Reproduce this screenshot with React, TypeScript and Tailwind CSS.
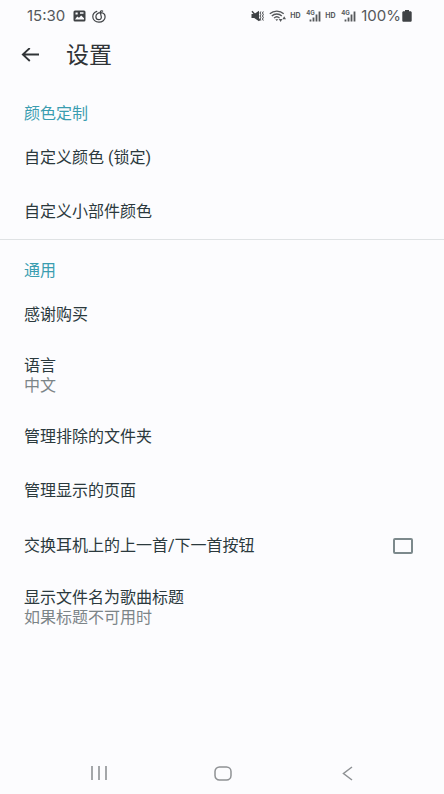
import type { ReactNode } from "react";

function StatusBar() {
  return (
    <div className="flex h-8 items-center justify-between pl-[27px] pr-8 font-['Inter',sans-serif] text-[#55585b]">
      <div className="flex items-center">
        <span className="w-[46px] text-[15px]">15:30</span>
        <svg width="13" height="12" viewBox="0 0 13 12" aria-hidden="true">
          <rect x="0.5" y="0.5" width="12" height="11" rx="1.500" fill="#3f4245" />
          <path d="M2 9.500 4.200 6.600 6 7.800 8.200 5.600 11 8.300V9.500Z" fill="#fcfcfe" />
          <path d="M2.500 2.500h2.200v2H2.500ZM7 2.300h3.500v1.400H7Z" fill="#fcfcfe" />
        </svg>
        <svg className="ml-[6px]" width="14" height="13" viewBox="0 0 14 13" fill="none" stroke="#3f4245" strokeWidth="1.200" strokeLinecap="round" aria-hidden="true">
          <path d="M4.800 1.400C2.300 2.200.8 4.200.8 6.700c0 3.100 2.700 5.500 6.100 5.500s6.200-2.300 6.200-5.300c0-2.300-1.600-4-4.200-4.200-3-.2-5 1.600-5 4 0 1.700 1.200 2.900 2.900 2.900s2.800-1.200 2.500-2.800L8.300 2.500C8.100 1.200 9.300.4 10.600 1.100" />
        </svg>
      </div>
      <div className="flex items-center">
        <svg width="13" height="12" viewBox="0 0 13 12" aria-hidden="true">
          <path d="M.5 4h2.700L8 .800v10.400L3.200 8H.5Z" fill="#3f4245" />
          <path d="M1 1.200 9 10.500" stroke="#3f4245" strokeWidth="1.400" />
          <path d="M9.800 1.500 9 3l.8 1.500L9 6l.8 1.500L9 9l.8 1.500M12.300 1.500 11.500 3l.8 1.500-.8 1.500.8 1.500-.8 1.500.8 1.500" fill="none" stroke="#3f4245" strokeWidth="1" />
        </svg>
        <svg className="ml-[5px]" width="18" height="12" viewBox="0 0 18 12" fill="none" stroke="#55585b" strokeWidth="1.300" aria-hidden="true">
          <path d="M.8 3.800C4.700.2 11 .2 14.700 3.800M2.800 6C5.600 3.300 10 3.300 12.800 6M5 8.100c1.600-1.500 4-1.500 5.600 0" />
          <path d="M6.300 9.300h3L7.800 11ZM9.800 9h3.600l-1.800 3ZM13.400 9.300h3.600L15.200 6.300Z" fill="#55585b" stroke="none" />
        </svg>
        <span className="ml-[3px] w-[16px] text-[7px] font-bold leading-3">HD</span>
        <Signal />
        <span className="ml-[4px] w-[16px] text-[7px] font-bold leading-3">HD</span>
        <Signal />
        <span className="ml-[5px] text-[15px]">100%</span>
        <svg className="ml-px" width="10" height="12" viewBox="0 0 10 12" fill="#3f4245" aria-hidden="true">
          <path d="M3 0h4v1.200h1.200C9.200 1.200 9.700 1.800 9.700 2.600v7.800c0 .9-.5 1.400-1.400 1.400H1.700C.8 11.800.3 11.300.3 10.400V2.600c0-.8.5-1.400 1.400-1.400H3Z" />
        </svg>
      </div>
    </div>
  );
}

function Signal() {
  return (
    <div className="relative h-3 w-[15px]">
      <span className="absolute -top-px left-0 text-[6px] font-bold leading-[7px]">4G</span>
      <svg className="h-3 w-[15px]" viewBox="0 0 15 12" stroke="#55585b" strokeWidth="1.800" aria-hidden="true">
        <path d="M4.500 11.500V9.500M7.500 11.500V7.500M10.500 11.500V4.500M13.500 11.500V1.500" />
      </svg>
    </div>
  );
}

function SectionTitle({ children }: { children: ReactNode }) {
  return <h2 className="flex h-[34px] items-center px-6 text-[#3a9db0]">{children}</h2>;
}

function SettingItem({ title, summary }: { title: string; summary?: string }) {
  return (
    <button
      type="button"
      className={`flex w-full flex-col justify-center px-6 text-left leading-5 ${summary ? "h-[68px]" : "h-[54px]"}`}
    >
      <span>{title}</span>
      {summary && <span className="text-[#7c8588]">{summary}</span>}
    </button>
  );
}

export default function App() {
  return (
    <div className="flex min-h-screen flex-col bg-[#fcfcfe] font-['Roboto','Noto_Sans_CJK_SC',sans-serif] text-[#2b393d]">
      <StatusBar />
      <header className="flex h-12 items-center pl-[21px]">
        <button type="button" aria-label="返回">
          <svg width="19" height="16" viewBox="0 0 19 16" fill="none" stroke="#303437" strokeWidth="1.800" aria-hidden="true">
            <path d="M18 6.500H2M8.800 0 1.800 6.500l7 6.500" />
          </svg>
        </button>
        <h1 className="ml-[26px] text-[23px] leading-8 text-[#303437]">设置</h1>
      </header>

      <main className="pt-[17px]">
        <section className="border-b border-[#dfe2e4]">
          <SectionTitle>颜色定制</SectionTitle>
          <SettingItem title="自定义颜色 (锁定)" />
          <SettingItem title="自定义小部件颜色" />
        </section>

        <section className="pt-[14px]">
          <SectionTitle>通用</SectionTitle>
          <SettingItem title="感谢购买" />
          <SettingItem title="语言" summary="中文" />
          <SettingItem title="管理排除的文件夹" />
          <SettingItem title="管理显示的页面" />
          <label className="flex h-14 items-center justify-between pl-6 pr-[31px]">
            <span>交换耳机上的上一首/下一首按钮</span>
            <input
              type="checkbox"
              className="h-4 w-5 appearance-none rounded-xs border-2 border-[#7c898c] checked:bg-[#3a9db0]"
            />
          </label>
          <SettingItem title="显示文件名为歌曲标题" summary="如果标题不可用时" />
        </section>
      </main>

      <nav className="mt-auto grid h-[42px] grid-cols-3 pl-[37px] pr-[34px]">
        <button type="button" aria-label="最近任务" className="flex items-center justify-center">
          <svg width="18" height="14" viewBox="0 0 18 14" stroke="#8e9194" strokeWidth="1.600" aria-hidden="true">
            <path d="M2 0v14M9 0v14M16 0v14" />
          </svg>
        </button>
        <button type="button" aria-label="主页" className="flex items-center justify-center">
          <svg width="18" height="15" viewBox="0 0 18 15" fill="none" stroke="#8e9194" strokeWidth="1.500" aria-hidden="true">
            <rect x="1" y="1" width="16" height="13" rx="4.500" />
          </svg>
        </button>
        <button type="button" aria-label="返回上一页" className="flex items-center justify-center">
          <svg width="11" height="15" viewBox="0 0 11 15" fill="none" stroke="#8e9194" strokeWidth="1.500" aria-hidden="true">
            <path d="M10 1 1.500 7.500 10 14" />
          </svg>
        </button>
      </nav>
    </div>
  );
}
